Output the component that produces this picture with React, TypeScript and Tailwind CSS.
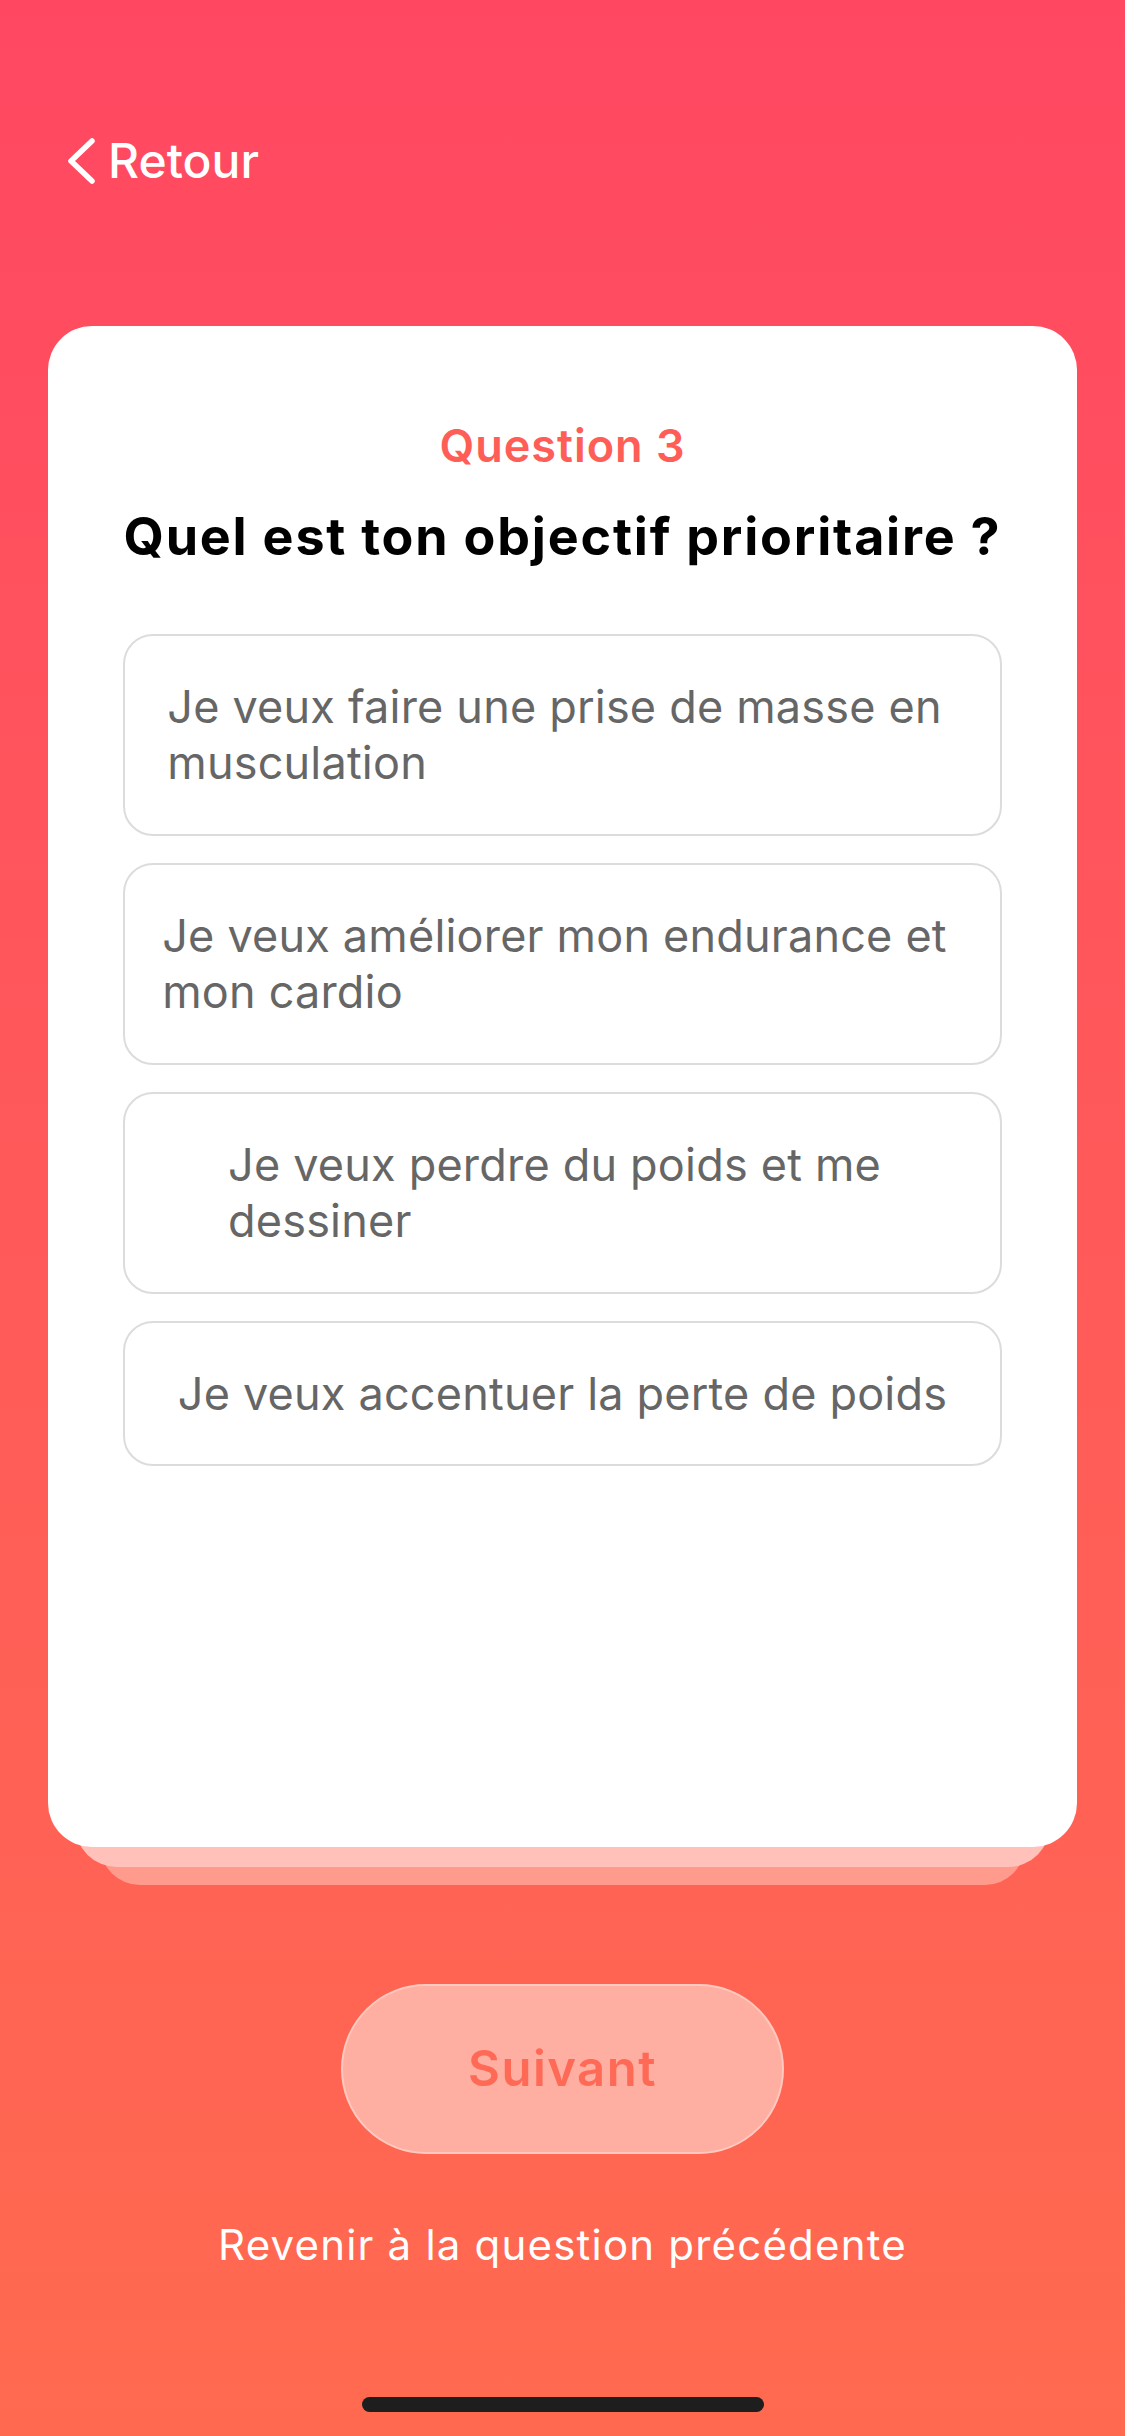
import React from 'react'

const options: string[][] = [
  ['Je veux faire une prise de masse en', 'musculation'],
  ['Je veux améliorer mon endurance et', 'mon cardio'],
  ['Je veux perdre du poids et me', 'dessiner'],
  ['Je veux accentuer la perte de poids'],
]

export default function App() {
  return (
    <main className="relative flex h-[2436px] w-[1125px] flex-col overflow-hidden bg-linear-to-b from-[#ff4762] to-[#ff6a4f] font-['Inter',sans-serif]">
      {/* Back link */}
      <div className="mt-[131px] flex h-[60px] items-center pl-[66px]">
        <svg width="30" height="48" viewBox="0 0 30 48" fill="none">
          <polyline points="26,4 5,24 26,44" stroke="white" strokeWidth="5.5" strokeLinecap="round" strokeLinejoin="round" />
        </svg>
        <span className="ml-[12px] text-[48px] font-medium leading-none text-white">Retour</span>
      </div>

      {/* Card stack */}
      <div className="relative mx-[48px] mt-[135px] h-[1521px]">
        <div className="absolute inset-x-[52px] top-[38px] bottom-[-38px] rounded-[40px] bg-[#ff9b8c]" />
        <div className="absolute inset-x-[27px] top-[20px] bottom-[-20px] rounded-[42px] bg-[#ffc1b9]" />
        <div className="relative flex h-full flex-col items-center rounded-[44px] bg-white px-[75px] pt-[92px]">
          <p className="text-[45px] font-semibold leading-[56px] tracking-[1px] text-[#ff5e57]">Question 3</p>
          <h1 className="mt-[32px] whitespace-nowrap text-[52px] font-bold leading-[62px] tracking-[1.8px] text-black">
            Quel est ton objectif prioritaire ?
          </h1>

          <div className="mt-[66px] flex w-full flex-col gap-[27px]">
            {options.map((lines, i) => (
              <button
                key={i}
                className={`flex w-full items-center justify-center rounded-[30px] border-2 border-[#dcdcdc] bg-white ${
                  lines.length > 1 ? 'h-[202px] pr-[16px]' : 'h-[145px]'
                }`}
              >
                <span className="w-fit text-left text-[45px] leading-[56px] tracking-[0.2px] text-[#666666]">
                  {lines.map((l, j) => (
                    <React.Fragment key={j}>
                      {j > 0 && <br />}
                      {l}
                    </React.Fragment>
                  ))}
                </span>
              </button>
            ))}
          </div>
        </div>
      </div>

      {/* Next button */}
      <div className="mt-[137px] flex justify-center">
        <button className="flex h-[170px] w-[443px] items-center justify-center rounded-full border-2 border-[#ffc9bf] bg-[#ffaea2] text-[49px] font-semibold tracking-[1.5px] text-[#ff6a57]">
          Suivant
        </button>
      </div>

      <p className="mt-[63px] text-center text-[42px] leading-[56px] tracking-[1.2px] text-white">Revenir à la question précédente</p>

      {/* Home indicator */}
      <div className="absolute bottom-[24px] left-[362px] h-[15px] w-[402px] rounded-full bg-[#1e1e1e]" />
    </main>
  )
}
